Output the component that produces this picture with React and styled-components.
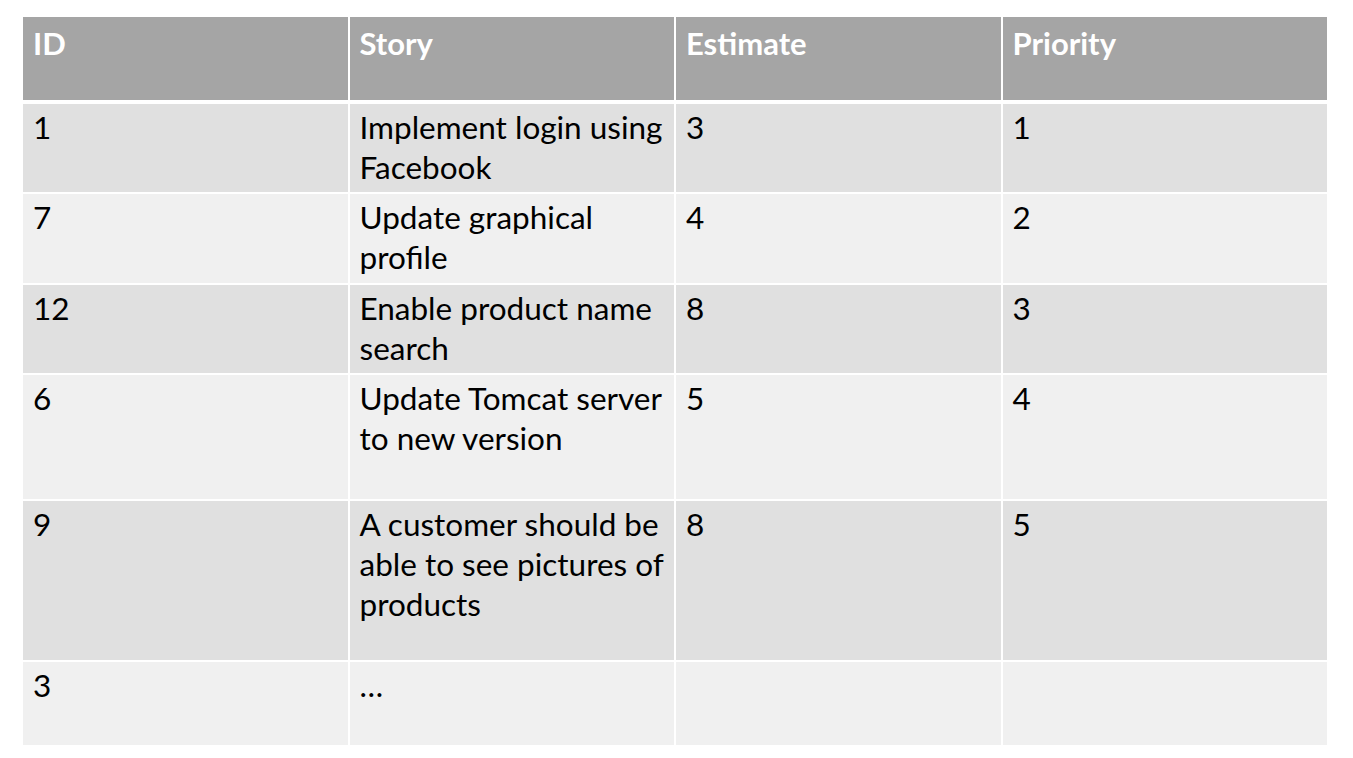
import React from 'react';
import styled, { createGlobalStyle } from 'styled-components';

const GlobalStyle = createGlobalStyle`
    html, body {
        margin: 0;
        padding: 0;
        background: #ffffff;
    }
`;

const Page = styled.div`
    width: 1353px;
    height: 758px;
    padding: 17px 0 0 23px;
    box-sizing: border-box;
    font-family: 'Lato', 'Open Sans', sans-serif;
`;

const Grid = styled.div`
    width: 1304px;
    display: grid;
    grid-template-columns: repeat(4, 1fr);
    grid-template-rows: 85px 88px 89px 88px 124px 159px 83px;
    column-gap: 2px;
    row-gap: 2px;
`;

const HeadCell = styled.div`
    background-color: #a5a5a5;
    color: #ffffff;
    font-weight: 700;
    font-size: 31px;
    line-height: 40px;
    padding: 6px 0 0 10px;
    margin-bottom: 2px;
`;

const Cell = styled.div`
    background-color: ${props => (props.$odd ? '#e0e0e0' : '#f0f0f0')};
    color: #000000;
    font-size: 31.5px;
    line-height: 40px;
    padding: 3px 0 0 10px;
    white-space: nowrap;
`;

const Line = styled.div``;

const headers = ['ID', 'Story', 'Estimate', 'Priority'];

const rows = [
    { id: '1', story: ['Implement login using', 'Facebook'], estimate: '3', priority: '1' },
    { id: '7', story: ['Update graphical', 'profile'], estimate: '4', priority: '2' },
    { id: '12', story: ['Enable product name', 'search'], estimate: '8', priority: '3' },
    { id: '6', story: ['Update Tomcat server', 'to new version'], estimate: '5', priority: '4' },
    { id: '9', story: ['A customer should be', 'able to see pictures of', 'products'], estimate: '8', priority: '5' },
    { id: '3', story: ['\u2026'], estimate: '', priority: '' },
];

export default function App() {
    return (
        <>
            <GlobalStyle />
            <Page>
                <Grid>
                    {headers.map(h => (
                        <HeadCell key={h}>{h}</HeadCell>
                    ))}
                    {rows.map((row, i) => {
                        const odd = i % 2 === 0;
                        return (
                            <React.Fragment key={row.id}>
                                <Cell $odd={odd}>{row.id}</Cell>
                                <Cell $odd={odd}>
                                    {row.story.map(line => (
                                        <Line key={line}>{line}</Line>
                                    ))}
                                </Cell>
                                <Cell $odd={odd}>{row.estimate}</Cell>
                                <Cell $odd={odd}>{row.priority}</Cell>
                            </React.Fragment>
                        );
                    })}
                </Grid>
            </Page>
        </>
    );
}
